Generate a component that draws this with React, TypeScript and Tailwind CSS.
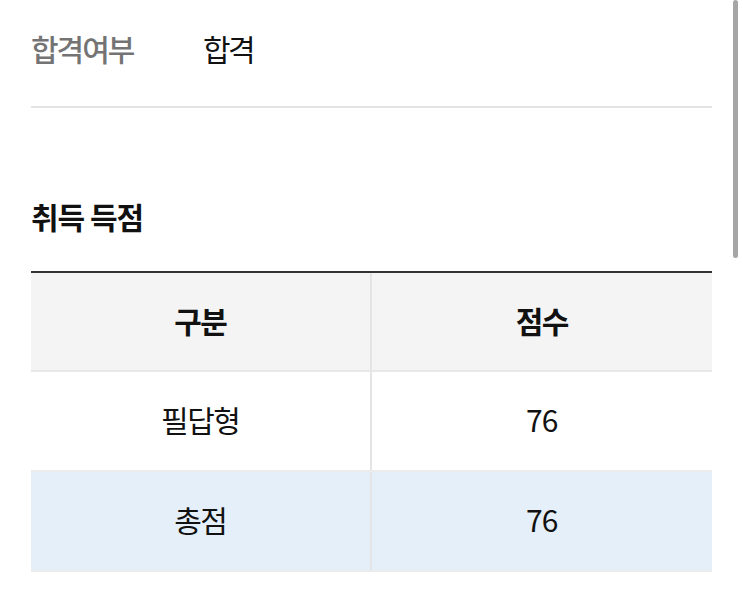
const font = { fontFamily: '"Noto Sans CJK KR", "Noto Sans", sans-serif' };

const rows = [
  { label: "필답형", score: "76", highlight: false },
  { label: "총점", score: "76", highlight: true },
];

export default function App() {
  return (
    <div className="relative h-[603px] w-[743px] overflow-hidden bg-white" style={font}>
      <div className="px-[31px]">
        <div className="flex items-center pb-[41px] pt-[31px] text-[30px] leading-[34px] tracking-[-2px] border-b-2 border-[#e3e3e3]">
          <span className="w-[172px] font-medium text-[#747474]">합격여부</span>
          <span className="tracking-[-2.5px] text-[#111111]">합격</span>
        </div>

        <h2 className="mb-[38px] mt-[91px] text-[30px] font-bold leading-[34px] tracking-[-1px] text-[#111111]">
          취득 득점
        </h2>

        <div className="border-t-2 border-[#333333] text-[30px] tracking-[-1.5px] text-[#111111]">
          <div className="grid h-[99px] grid-cols-2 border-b-2 border-[#e8e8e8] bg-[#f4f4f4] font-bold">
            <div className="flex items-center justify-center border-r-2 border-[#e4e4e4] pb-[3px]">구분</div>
            <div className="flex items-center justify-center pb-[3px]">점수</div>
          </div>
          {rows.map((row) => (
            <div
              key={row.label}
              className={`grid h-[100px] grid-cols-2 border-b-2 border-[#ececec] ${
                row.highlight ? "bg-[#e5eff9]" : "bg-white"
              }`}
            >
              <div className="flex items-center justify-center border-r-2 border-[#e4e4e4] pb-[4px]">{row.label}</div>
              <div className="flex items-center justify-center pb-[4px] tracking-[-1px]">{row.score}</div>
            </div>
          ))}
        </div>
      </div>

      {/* scrollbar thumb */}
      <div className="absolute right-[5px] top-0 h-[258px] w-[5px] rounded-full bg-[#a6a6a6]" />
    </div>
  );
}
